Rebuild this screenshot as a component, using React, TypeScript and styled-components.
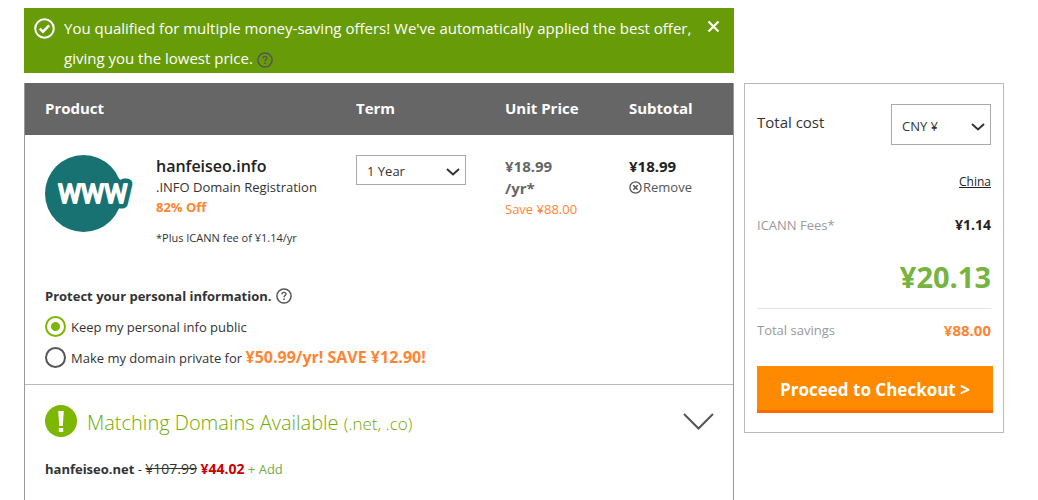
import React from "react";
import styled, { createGlobalStyle } from "styled-components";

const GlobalStyle = createGlobalStyle`
  * { box-sizing: border-box; }
  body {
    margin: 0;
    background: #fff;
    color: #333;
    font: 400 13px/20px "Open Sans", "Noto Sans", sans-serif;
    overflow-x: hidden;
  }
  button, select { font: inherit; color: inherit; }
  b { font-weight: 700; }
`;

const Page = styled.div`
  display: flex;
  gap: 10px;
  padding: 8px 34px 0 24px;
`;

const Main = styled.main`
  flex: 1;
  min-width: 0;
`;

const Banner = styled.div`
  display: flex;
  align-items: flex-start;
  gap: 9px;
  padding: 5px 14px 0 10px;
  min-height: 65px;
  margin-bottom: 10px;
  background: #689b08;
  color: #fff;
  > svg { flex: none; margin-top: 5px; }
`;

const BannerText = styled.p`
  flex: 1;
  margin: 0;
  font-size: 15px;
  line-height: 30px;
`;

const IconButton = styled.button`
  display: inline-flex;
  padding: 0;
  border: 0;
  background: none;
  cursor: pointer;
`;

const CloseButton = styled(IconButton)`
  margin-top: 7px;
`;

const HelpButton = styled(IconButton)`
  vertical-align: middle;
  color: #555;
`;

const ExpandButton = styled(IconButton)`
  color: #555;
`;

const Panel = styled.div`
  border: 1px solid #999;
  border-top: 0;
  padding-bottom: 30px;
`;

const CartTable = styled.table`
  width: 100%;
  table-layout: fixed;
  border-collapse: collapse;
  border-bottom: 1px solid #bbb;
`;

const HeadCell = styled.th<{ $width?: number }>`
  width: ${(p) => (p.$width ? `${p.$width}px` : "auto")};
  height: 52px;
  padding: 0 0 2px;
  background: #666;
  color: #fff;
  font-size: 15px;
  font-weight: 700;
  text-align: left;
  &:first-child { padding-left: 20px; }
`;

const Cell = styled.td`
  padding: 20px 0 0;
  vertical-align: top;
  &:first-child { padding-left: 20px; }
`;

const PrivacyCell = styled.td`
  padding: 38px 0 16px 20px;
`;

const Product = styled.div`
  display: flex;
  align-items: flex-start;
  gap: 21px;
`;

const Logo = styled.svg`
  flex: none;
`;

const Line = styled.div<{ $size?: number; $bold?: boolean; $color?: string; $gap?: number }>`
  margin-top: ${(p) => p.$gap ?? 0}px;
  font-size: ${(p) => p.$size ?? 13}px;
  font-weight: ${(p) => (p.$bold ? 700 : "inherit")};
  color: ${(p) => p.$color ?? "inherit"};
  line-height: ${(p) => ((p.$size ?? 13) > 14 ? 22 : 20)}px;
`;

const ProductName = styled(Line)`
  font-weight: 600;
`;

const SelectWrap = styled.span<{ $width: number; $height: number }>`
  display: grid;
  width: ${(p) => p.$width}px;
  height: ${(p) => p.$height}px;
  align-items: center;
  > * { grid-area: 1 / 1; }
  > svg { justify-self: end; margin: 4px 6px 0 0; pointer-events: none; }
`;

const Select = styled.select`
  appearance: none;
  width: 100%;
  height: 100%;
  padding: 2px 24px 0 10px;
  border: 1px solid #aaa;
  border-radius: 0;
  background: #fff;
`;

const RemoveButton = styled(IconButton)`
  align-items: center;
  gap: 1px;
  color: #555;
  line-height: 20px;
`;

const Privacy = styled.fieldset`
  margin: 0;
  padding: 0;
  border: 0;
`;

const Legend = styled.div`
  display: flex;
  align-items: center;
  gap: 4px;
  margin-bottom: 10px;
  font-weight: 700;
`;

const Option = styled.label`
  display: flex;
  align-items: center;
  gap: 5px;
  height: 21px;
  & + & { margin-top: 10px; }
`;

const Radio = styled.input`
  appearance: none;
  width: 21px;
  height: 21px;
  margin: 0;
  border: 2px solid #555;
  border-radius: 50%;
  &:checked {
    border-color: #7db701;
    background: radial-gradient(circle, #7db701 4px, #fff 5px);
  }
`;

const Offer = styled.b`
  font-size: 16px;
  color: #ff8533;
`;

const Matching = styled.section`
  padding: 20px 19px 0 20px;
`;

const MatchingHead = styled.div`
  display: flex;
  align-items: center;
  gap: 10px;
  height: 32px;
`;

const MatchingTitle = styled.h2`
  flex: 1;
  margin: 0;
  padding-top: 4px;
  color: #71ab00;
  font-size: 20px;
  font-weight: 300;
  line-height: 28px;
  small { font-size: 17px; }
`;

const Suggestion = styled.p`
  margin: 22px 0 0;
`;

const OldPrice = styled.s`
  font-size: 14px;
`;

const Price = styled.b`
  color: #c00;
  font-size: 14px;
`;

const AddLink = styled.a`
  color: #77a948;
  text-decoration: none;
`;

const Summary = styled.aside`
  flex: none;
  align-self: flex-start;
  width: 260px;
  margin-top: 75px;
  padding: 20px 12px 19px;
  border: 1px solid #bbb;
`;

const SummaryRow = styled.div<{ $top?: number; $muted?: boolean }>`
  display: flex;
  justify-content: space-between;
  align-items: center;
  margin-top: ${(p) => p.$top ?? 0}px;
  color: ${(p) => (p.$muted ? "#999" : "inherit")};
`;

const TotalLabel = styled.label`
  align-self: flex-start;
  margin-top: 8px;
  font-size: 15px;
`;

const Amount = styled.b<{ $color?: string; $size?: number }>`
  color: ${(p) => p.$color ?? "#222"};
  font-size: ${(p) => p.$size ?? 14}px;
`;

const Country = styled.a`
  margin-left: auto;
  color: #222;
  font-size: 12px;
`;

const GrandTotal = styled.div`
  padding-bottom: 11px;
  border-bottom: 1px solid #e3e3e3;
  margin-top: 22px;
  color: #77b43f;
  font-size: 29px;
  font-weight: 700;
  line-height: 40px;
  text-align: right;
`;

const Checkout = styled.button`
  display: block;
  width: calc(100% + 2px);
  height: 47px;
  margin-top: 26px;
  padding: 3px 0 0;
  border: 0;
  border-bottom: 3px solid #ff6a00;
  background: #ff8a00;
  color: #fff;
  font-size: 17px;
  font-weight: 700;
`;

const Chevron = ({ w = 14, h = 8, stroke = 2 }: { w?: number; h?: number; stroke?: number }) => (
  <svg width={w} height={h} viewBox={`0 0 ${w} ${h}`} fill="none" stroke="currentColor" strokeWidth={stroke}>
    <path d={`M1 1L${w / 2} ${h - 1.5}L${w - 1} 1`} />
  </svg>
);

const Help = () => (
  <svg width="16" height="16" viewBox="0 0 16 16" fill="none" stroke="currentColor">
    <circle cx="8" cy="8" r="7.1" strokeWidth="1.5" />
    <path d="M5.9 6.2C6 3.8 10 3.8 10 6.1C10 7.6 8 7.5 8 9.3" strokeWidth="1.4" />
    <path d="M8 10.6V12" strokeWidth="1.6" />
  </svg>
);

const WwwLogo = () => (
  <Logo width="90" height="77" viewBox="0 0 90 77" role="img" aria-label="www">
    <circle cx="38.5" cy="38.5" r="38.5" fill="#187272" />
    <g fontFamily="Roboto, sans-serif" fontSize="26" fontWeight="400" strokeLinejoin="round">
      <text x="13" y="48" fill="#187272" stroke="#187272" strokeWidth="11">WWW</text>
      <text x="13" y="48" fill="#fff" stroke="#fff" strokeWidth="2">WWW</text>
    </g>
  </Logo>
);

export default function App() {
  return (
    <>
      <GlobalStyle />
      <Page>
        <Main>
          <Banner role="status">
            <svg width="21" height="21" viewBox="0 0 21 21" fill="none" stroke="#fff" strokeWidth="2">
              <circle cx="10.5" cy="10.5" r="9.3" />
              <path d="M5.8 10.6L9 13.6L15.2 7.4" strokeWidth="2.6" />
            </svg>
            <BannerText>
              You qualified for multiple money-saving offers! We've automatically applied the best offer,
              giving you the lowest price.{" "}
              <HelpButton aria-label="About offers"><Help /></HelpButton>
            </BannerText>
            <CloseButton aria-label="Close">
              <svg width="13" height="13" viewBox="0 0 13 13" stroke="#fff" strokeWidth="2.2">
                <path d="M1.5 1.5L11.5 11.5M11.5 1.5L1.5 11.5" />
              </svg>
            </CloseButton>
          </Banner>

          <Panel>
            <CartTable>
              <thead>
                <tr>
                  <HeadCell>Product</HeadCell>
                  <HeadCell $width={149}>Term</HeadCell>
                  <HeadCell $width={124}>Unit Price</HeadCell>
                  <HeadCell $width={104}>Subtotal</HeadCell>
                </tr>
              </thead>
              <tbody>
                <tr>
                  <Cell>
                    <Product>
                      <WwwLogo />
                      <div>
                        <ProductName $size={16} $color="#222">hanfeiseo.info</ProductName>
                        <Line>.INFO Domain Registration</Line>
                        <Line $bold $color="#ff8533">82% Off</Line>
                        <Line $size={11} $gap={11}>*Plus ICANN fee of ¥1.14/yr</Line>
                      </div>
                    </Product>
                  </Cell>
                  <Cell>
                    <SelectWrap $width={110} $height={30}>
                      <Select aria-label="Term" defaultValue="1"><option value="1">1 Year</option></Select>
                      <Chevron />
                    </SelectWrap>
                  </Cell>
                  <Cell>
                    <Line $size={15} $bold $color="#666">¥18.99</Line>
                    <Line $size={15} $bold $color="#666">/yr*</Line>
                    <Line $color="#ff8533">Save ¥88.00</Line>
                  </Cell>
                  <Cell>
                    <Line $size={15} $bold $color="#222">¥18.99</Line>
                    <RemoveButton>
                      <svg width="13" height="13" viewBox="0 0 13 13" fill="none" stroke="currentColor" strokeWidth="1.3">
                        <circle cx="6.5" cy="6.5" r="5.6" />
                        <path d="M4.3 4.3L8.7 8.7M8.7 4.3L4.3 8.7" strokeWidth="1.6" />
                      </svg>
                      Remove
                    </RemoveButton>
                  </Cell>
                </tr>
                <tr>
                  <PrivacyCell colSpan={4}>
                    <Privacy aria-label="Protect your personal information">
                      <Legend>
                        Protect your personal information.
                        <HelpButton aria-label="About privacy"><Help /></HelpButton>
                      </Legend>
                      <Option>
                        <Radio type="radio" name="privacy" defaultChecked />
                        Keep my personal info public
                      </Option>
                      <Option>
                        <Radio type="radio" name="privacy" />
                        <span>Make my domain private for <Offer>¥50.99/yr! SAVE ¥12.90!</Offer></span>
                      </Option>
                    </Privacy>
                  </PrivacyCell>
                </tr>
              </tbody>
            </CartTable>

            <Matching>
              <MatchingHead>
                <svg width="32" height="32" viewBox="0 0 32 32">
                  <circle cx="16" cy="16" r="16" fill="#7db701" />
                  <path d="M13.2 6H18.8L17.8 21H14.2Z M13.8 23H18.2V27H13.8Z" fill="#fff" />
                </svg>
                <MatchingTitle>Matching Domains Available <small>(.net, .co)</small></MatchingTitle>
                <ExpandButton aria-label="Expand"><Chevron w={31} h={17} /></ExpandButton>
              </MatchingHead>
              <Suggestion>
                <b>hanfeiseo.net</b> - <OldPrice>¥107.99</OldPrice> <Price>¥44.02</Price>{" "}
                <AddLink href="#add">+ Add</AddLink>
              </Suggestion>
            </Matching>
          </Panel>
        </Main>

        <Summary>
          <SummaryRow>
            <TotalLabel htmlFor="currency">Total cost</TotalLabel>
            <SelectWrap $width={100} $height={41}>
              <Select id="currency" defaultValue="CNY"><option value="CNY">CNY ¥</option></Select>
              <Chevron />
            </SelectWrap>
          </SummaryRow>
          <SummaryRow $top={27}><Country href="#country">China</Country></SummaryRow>
          <SummaryRow $top={23} $muted><span>ICANN Fees*</span><Amount>¥1.14</Amount></SummaryRow>
          <GrandTotal>¥20.13</GrandTotal>
          <SummaryRow $top={11} $muted><span>Total savings</span><Amount $color="#ff8533" $size={15}>¥88.00</Amount></SummaryRow>
          <Checkout>Proceed to Checkout &gt;</Checkout>
        </Summary>
      </Page>
    </>
  );
}
